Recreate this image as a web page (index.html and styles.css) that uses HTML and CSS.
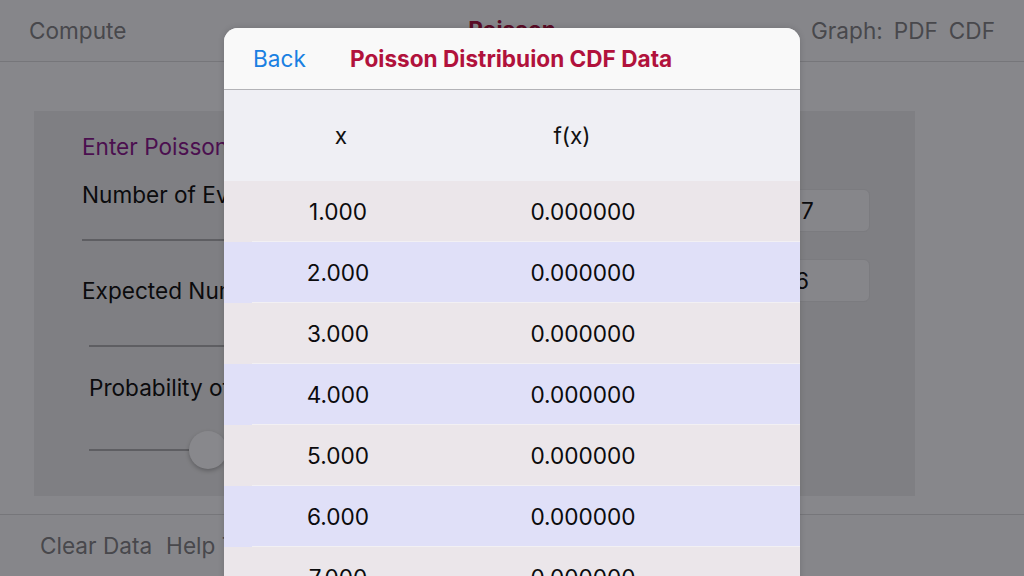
FILE: index.html
```html
<!DOCTYPE html>
<html>
<head>
<meta charset="utf-8">
<link rel="stylesheet" href="styles.css">
</head>
<body>
<div class="app">
  <header class="navbar">
    <span class="nav-btn">Compute</span>
    <span class="nav-title">Poisson</span>
    <span class="nav-right"><span>Graph:</span><span>PDF</span><span>CDF</span></span>
  </header>
  <main class="content">
    <section class="panel">
      <div class="form-col">
        <div class="form-title">Enter Poisson Distribution Parameters</div>
        <div class="label">Number of Events</div>
        <div class="rule"></div>
        <div class="label">Expected Number of Events</div>
        <div class="rule indent"></div>
        <div class="label indent">Probability of Events</div>
        <div class="slider indent"><div class="track"></div><div class="thumb"></div><div class="track right"></div></div>
      </div>
      <div class="field-col">
        <div class="field"><span class="val-a">7</span></div>
        <div class="field"><span class="val-b">6</span></div>
      </div>
    </section>
  </main>
  <footer class="toolbar">
    <span>Clear Data</span><span>Help Topics</span>
  </footer>
</div>

<div class="modal">
  <div class="modal-head">
    <span class="back">Back</span>
    <span class="modal-title">Poisson Distribuion CDF Data</span>
  </div>
  <div class="table-head">
    <span class="c1">x</span><span class="c2">f(x)</span>
  </div>
  <div class="rows">
    <div class="row odd"><div class="row-in"><span class="c1">1.000</span><span class="c2">0.000000</span></div></div>
    <div class="row even"><div class="row-in"><span class="c1">2.000</span><span class="c2">0.000000</span></div></div>
    <div class="row odd"><div class="row-in"><span class="c1">3.000</span><span class="c2">0.000000</span></div></div>
    <div class="row even"><div class="row-in"><span class="c1">4.000</span><span class="c2">0.000000</span></div></div>
    <div class="row odd"><div class="row-in"><span class="c1">5.000</span><span class="c2">0.000000</span></div></div>
    <div class="row even"><div class="row-in"><span class="c1">6.000</span><span class="c2">0.000000</span></div></div>
    <div class="row odd"><div class="row-in"><span class="c1">7.000</span><span class="c2">0.000000</span></div></div>
  </div>
</div>
</body>
</html>
```
FILE: styles.css
```css
* { box-sizing: border-box; }
html, body { margin: 0; padding: 0; }
body {
  width: 1024px;
  height: 576px;
  overflow: hidden;
  position: relative;
  background: #87878b;
  font-family: Inter, "Noto Sans", sans-serif;
  font-size: 22.6px;
  color: #0b0b0d;
}
.app {
  display: flex;
  flex-direction: column;
  height: 576px;
}
.navbar {
  height: 62px;
  border-bottom: 1px solid #76767a;
  display: flex;
  align-items: center;
  justify-content: space-between;
  padding: 0 29px;
  background: #86868a;
  color: #48484c;
  position: relative;
}
.nav-title {
  position: absolute;
  left: 0; right: 0;
  text-align: center;
  color: #5a0c26;
  font-weight: 700;
  top: 16px;
}
.nav-right { display: flex; gap: 11px; }
.content {
  flex: 1;
  padding: 49px 109px 18px 34px;
}
.panel {
  height: 385px;
  background: #7f7f83;
  display: flex;
  padding: 0 45px 0 48px;
}
.form-col {
  flex: 1;
  display: flex;
  flex-direction: column;
}
.form-title {
  color: #4b0f4f;
  height: 30px;
  line-height: 30px;
  margin-top: 21px;
}
.label {
  height: 30px;
  line-height: 30px;
  margin-top: 18px;
  white-space: nowrap;
}
.rule {
  height: 2px;
  background: #5e5e62;
  margin-top: 29px;
  width: 300px;
}
.rule + .label { margin-top: 35px; }
.rule.indent { margin-top: 39px; }
.indent { margin-left: 7px; }
.rule.indent + .label { margin-top: 26px; }
.slider {
  margin-top: 27px;
  height: 40px;
  display: flex;
  align-items: center;
}
.track { width: 100px; height: 2px; background: #5e5e62; }
.track.right { width: 200px; background: #76767a; }
.thumb {
  width: 38px; height: 38px;
  border-radius: 50%;
  background: #88888c;
  box-shadow: 0 2px 4px rgba(0,0,0,0.25);
  flex: none;
}
.field-col {
  width: 180px;
  padding-top: 78px;
  display: flex;
  flex-direction: column;
  gap: 27px;
}
.field {
  height: 43px;
  border-radius: 6px;
  background: #86868a;
  border: 1px solid #7b7b7f;
  line-height: 41px;
  padding-left: 110px;
}
.field .val-b { margin-left: -6px; }
.toolbar {
  height: 62px;
  border-top: 1px solid #76767a;
  display: flex;
  gap: 14px;
  align-items: center;
  padding: 0 40px;
  color: #48484c;
  background: #86868a;
}

.modal {
  position: absolute;
  left: 224px;
  top: 28px;
  width: 576px;
  height: 600px;
  border-radius: 14px 14px 0 0;
  overflow: hidden;
  background: #efeff4;
  box-shadow: 0 0 6px rgba(0,0,0,0.15);
}
.modal-head {
  height: 62px;
  background: #f9f9f9;
  border-bottom: 1px solid #b3b3b7;
  display: flex;
  align-items: center;
  padding-left: 29px;
}
.back { color: #1a80e2; width: 97px; }
.modal-title { color: #b1123c; font-weight: 700; }
.table-head {
  height: 91px;
  display: grid;
  grid-template-columns: 234px 228px 1fr;
  align-items: center;
  color: #111;
}
.table-head span { text-align: center; }
.row.odd { background: #ebe6ea; }
.row.even { background: #e0e0f8; }
.row-in {
  margin-left: 28px;
  height: 61px;
  border-bottom: 1px solid #f2f0f3;
  display: grid;
  grid-template-columns: 172px 318px 1fr;
  align-items: center;
}
.row-in span { text-align: center; }
```
